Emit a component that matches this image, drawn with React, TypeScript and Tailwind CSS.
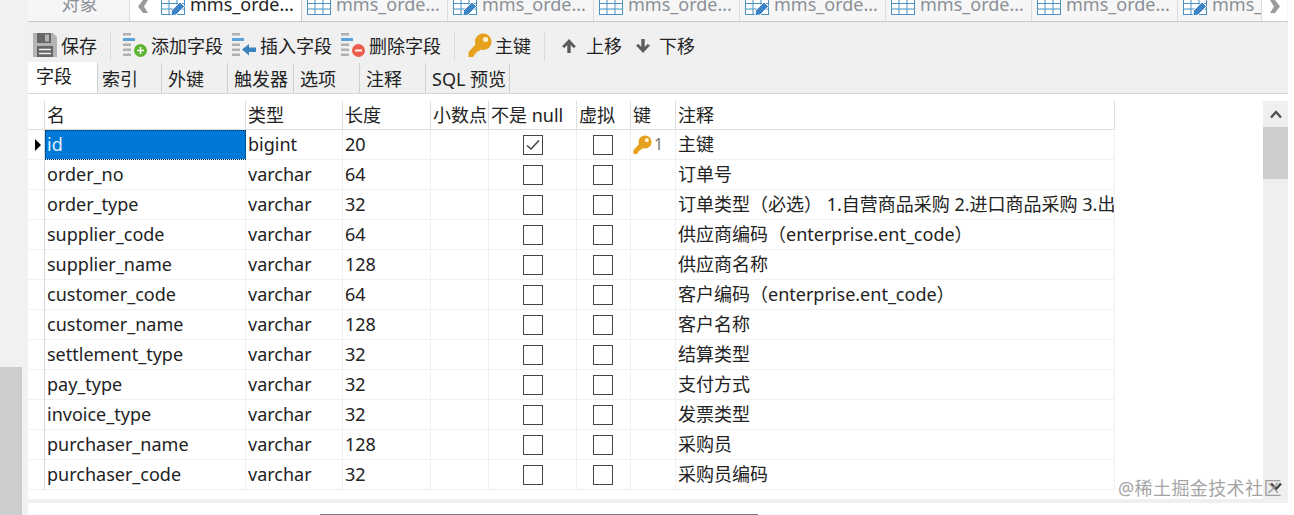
import React from "react";

const tabs = [
  { edit: false },
  { edit: true },
  { edit: false },
  { edit: true },
  { edit: false },
  { edit: false },
  { edit: true },
];

const subTabs = [
  { label: "索引", w: "w-[64px] pl-[4px]" },
  { label: "外键", w: "w-[66px] pl-[6px]" },
  { label: "触发器", w: "w-[66px] pl-[6px]" },
  { label: "选项", w: "w-[66px] pl-[6px]" },
  { label: "注释", w: "w-[66px] pl-[6px]" },
  { label: "SQL 预览", w: "w-[84px] pl-[6px]" },
];

const rows = [
  ["id", "bigint", "20", "主键"],
  ["order_no", "varchar", "64", "订单号"],
  ["order_type", "varchar", "32", "订单类型（必选） 1.自营商品采购 2.进口商品采购 3.出口商品采购"],
  ["supplier_code", "varchar", "64", "供应商编码（enterprise.ent_code）"],
  ["supplier_name", "varchar", "128", "供应商名称"],
  ["customer_code", "varchar", "64", "客户编码（enterprise.ent_code）"],
  ["customer_name", "varchar", "128", "客户名称"],
  ["settlement_type", "varchar", "32", "结算类型"],
  ["pay_type", "varchar", "32", "支付方式"],
  ["invoice_type", "varchar", "32", "发票类型"],
  ["purchaser_name", "varchar", "128", "采购员"],
  ["purchaser_code", "varchar", "32", "采购员编码"],
];

const gridCols = "grid grid-cols-[17px_201px_97px_88px_58px_88px_54px_45px_439px] w-[1087px]";

function TableIcon({ edit }: { edit: boolean }) {
  return (
    <svg width="24" height="18" viewBox="0 0 24 18" className="shrink-0 -mt-[2px]">
      <g fill="none" stroke="#4a90c2" strokeWidth="1">
        <rect x="0.5" y="0.5" width="23" height="16" fill="#fff" />
        <path d="M0.5 5.5h23M0.5 11h23M8 0.5v16M16 0.5v16" />
      </g>
      {edit && (
        <path
          d="M10 18 L10.5 12.5 L19 4 L23.5 8.5 L15 17 Z"
          fill="#3d85c6"
          stroke="#fff"
          strokeWidth="1"
        />
      )}
    </svg>
  );
}

function KeyIcon({ size = 24 }: { size?: number }) {
  return (
    <svg width={size} height={size} viewBox="0 0 24 24" className="shrink-0">
      <circle cx="15.2" cy="8.8" r="8.3" fill="#e6a11f" />
      <path d="M9 10 L14 15 L10.5 18.5 H8.5 V20.5 H6.5 V22.5 L5 24 H0.5 V19 Z" fill="#e6a11f" />
      <circle cx="17.5" cy="6.5" r="2.6" fill="#fdf0cf" />
    </svg>
  );
}

function FieldIcon({ kind }: { kind: "add" | "insert" | "delete" }) {
  return (
    <svg width="24" height="24" viewBox="0 0 24 24" className="shrink-0 -mt-[2px]">
      <rect x="0" y="0" width="8" height="2.5" fill="#b0b0b0" />
      <rect x="0" y="5" width="12" height="3" fill="#5ba3d9" />
      <rect x="0" y="10.5" width="8" height="2.5" fill="#b0b0b0" />
      <rect x="0" y="15.5" width="8" height="2.5" fill="#b0b0b0" />
      <rect x="0" y="20.5" width="8" height="2.5" fill="#b0b0b0" />
      {kind === "add" && (
        <g>
          <circle cx="17.5" cy="17.5" r="6.5" fill="#5cb531" />
          <path d="M17.5 14v7M14 17.5h7" stroke="#fff" strokeWidth="1.6" />
        </g>
      )}
      {kind === "insert" && <path d="M10 16.5 L17 11 V14.5 H24 V19 H17 V22.5 Z" fill="#3b83bd" />}
      {kind === "delete" && (
        <g>
          <circle cx="17.5" cy="17.5" r="6.5" fill="#ec5f4e" />
          <path d="M14 17.5h7" stroke="#fff" strokeWidth="1.8" />
        </g>
      )}
    </svg>
  );
}

function SaveIcon() {
  return (
    <svg width="24" height="24" viewBox="0 0 24 24" className="shrink-0 -mt-[2px]">
      <path d="M0 0h20l4 4v20H0z" fill="#b4b4b4" />
      <rect x="4" y="0" width="14" height="10" fill="#666" />
      <rect x="12" y="1.5" width="4" height="7" fill="#b4b4b4" />
      <rect x="4" y="13" width="16" height="11" fill="#666" />
      <path d="M6 16.5h12M6 20.5h12" stroke="#f0f0f0" strokeWidth="1.5" />
    </svg>
  );
}

function Arrow({ down }: { down?: boolean }) {
  return (
    <svg width="16" height="16" viewBox="0 0 16 16" className={down ? "rotate-180 shrink-0" : "shrink-0"}>
      <path d="M8 1 L15 8.5 L12.6 10 L9.7 7 V15 H6.3 V7 L3.4 10 L1 8.5 Z" fill="#5c5c5c" />
    </svg>
  );
}

function Check({ on }: { on?: boolean }) {
  return (
    <div className="w-[20px] h-[20px] border-[1.5px] border-[#454545] bg-white flex items-center justify-center">
      {on && (
        <svg width="14" height="12" viewBox="0 0 14 12">
          <path d="M1 6.5 L5 10 L13 1.5" fill="none" stroke="#454545" strokeWidth="1.6" />
        </svg>
      )}
    </div>
  );
}

function Sep() {
  return <div className="w-px h-[30px] bg-[#dcdcdc]" />;
}

const headCell = "h-[29px] border-r border-b border-r-[#dedede] border-b-[#dedede] pl-[2px] leading-[29px] whitespace-nowrap overflow-hidden";
const bodyCell = "h-[30px] border-r border-b border-[#f0f0f0] pl-[2px] leading-[29px] whitespace-nowrap overflow-hidden";

export default function App() {
  return (
    <div className="flex w-[1294px] h-[515px] overflow-hidden bg-white text-[18px] text-[#222] font-['Noto_Sans','Noto_Sans_CJK_SC',sans-serif]">
      {/* left dock strip */}
      <div className="w-[28px] h-full flex flex-col bg-[#f1f1f1]">
        <div className="h-[367px]" />
        <div className="w-[22px] flex-1 bg-[#cdcdcd]" />
      </div>

      <div className="w-[1260px] flex flex-col">
        {/* document tabs, top is cut off by the crop */}
        <div className="h-[22px] shrink-0 overflow-hidden flex border-b border-[#c8c8c8] bg-[#f6f6f6] text-[#8b9097]">
          <div className="w-[102px] h-full border-r border-[#dcdcdc] flex justify-center">
            <span className="-mt-[9px] pl-[2px] leading-[27px]">对象</span>
          </div>
          <div className="w-[26px] h-full bg-white flex items-start justify-center">
            <svg width="14" height="15" viewBox="0 0 14 15"><path d="M7 0 L2 6.5 L7 13 H12 L8 6.5 L12 0 Z" fill="#9a9a9a" /></svg>
          </div>
          <div className="w-[146px] h-[22px] bg-white text-[#222] border-r border-[#c8c8c8] flex items-start pl-[5px] gap-[4px]">
            <TableIcon edit />
            <span className="-mt-[9px] leading-[27px] ml-[1px]">mms_orde...</span>
          </div>
          {tabs.map((t, i) => (
            <div key={i} className={i === 6 ? "w-[84px] h-full border-r border-[#dcdcdc] flex items-start pl-[5px] gap-[4px] overflow-hidden" : "w-[146px] h-full border-r border-[#dcdcdc] flex items-start pl-[5px] gap-[4px]"}>
              <TableIcon edit={t.edit} />
              <span className="-mt-[9px] leading-[27px] ml-[1px] whitespace-nowrap">mms_orde...</span>
            </div>
          ))}
          <div className="w-[25px] h-full bg-white flex items-start justify-center">
            <svg width="14" height="15" viewBox="0 0 14 15"><path d="M7 0 L12 6.5 L7 13 H2 L6 6.5 L2 0 Z" fill="#9a9a9a" /></svg>
          </div>
        </div>

        {/* toolbar */}
        <div className="h-[41px] shrink-0 flex items-center bg-[#f0f0f0] pt-[7px] pl-[5px]">
          <SaveIcon />
          <span className="ml-[4px] mr-[13px]">保存</span>
          <Sep />
          <div className="ml-[12px]"><FieldIcon kind="add" /></div>
          <span className="ml-[4px] mr-[9px]">添加字段</span>
          <FieldIcon kind="insert" />
          <span className="ml-[4px] mr-[9px]">插入字段</span>
          <FieldIcon kind="delete" />
          <span className="ml-[4px] mr-[13px]">删除字段</span>
          <Sep />
          <div className="ml-[13px] -mt-[2px]"><KeyIcon /></div>
          <span className="ml-[3px] mr-[13px]">主键</span>
          <Sep />
          <div className="ml-[16px]"><Arrow /></div>
          <span className="ml-[9px] mr-[13px]">上移</span>
          <Arrow down />
          <span className="ml-[8px]">下移</span>
        </div>

        {/* sub tabs */}
        <div className="h-[31px] shrink-0 flex border-b border-[#d6d6d6] bg-[#f0f0f0]">
          <div className="w-[70px] h-[31px] -mt-px bg-white border-r border-[#d0d0d0] pl-[8px] leading-[29px] shrink-0">字段</div>
          {subTabs.map((t) => (
            <div key={t.label} className={`${t.w} h-full border-r border-[#d0d0d0] leading-[33px] shrink-0 whitespace-nowrap`}>
              {t.label}
            </div>
          ))}
        </div>

        {/* field grid + scrollbar */}
        <div className="flex-1 flex flex-col pt-[7px]">
          <div className="h-[398px] flex">
            <div className="w-[1235px]">
              <div className={gridCols}>
                <div className={headCell} />
                <div className={headCell}>名</div>
                <div className={headCell}>类型</div>
                <div className={headCell}>长度</div>
                <div className={headCell}>小数点</div>
                <div className={headCell}>不是 null</div>
                <div className={headCell}>虚拟</div>
                <div className={headCell}>键</div>
                <div className={headCell}>注释</div>
                {rows.map((r, i) => (
                  <React.Fragment key={r[0]}>
                    <div className={`${bodyCell} !pl-0 border-r-[#d8d8d8] flex items-center justify-end pr-[3px]`}>
                      {i === 0 && <div className="w-0 h-0 border-y-[6px] border-y-transparent border-l-[6px] border-l-black" />}
                    </div>
                    {i === 0 ? (
                      <div className="h-[30px] border-b border-[#f0f0f0] bg-[#0078d7] outline-1 -outline-offset-1 outline-dotted outline-[#0a2a4a] pl-[2px] leading-[29px] text-[#dff0ff]">
                        {r[0]}
                      </div>
                    ) : (
                      <div className={bodyCell}>{r[0]}</div>
                    )}
                    <div className={bodyCell}>{r[1]}</div>
                    <div className={bodyCell}>{r[2]}</div>
                    <div className={bodyCell} />
                    <div className={`${bodyCell} flex items-center justify-center !pl-0`}>
                      <Check on={i === 0} />
                    </div>
                    <div className={`${bodyCell} flex items-center justify-center !pl-0 pr-[2px]`}>
                      <Check />
                    </div>
                    <div className={`${bodyCell} flex items-center text-[#777]`}>
                      {i === 0 && (
                        <>
                          <KeyIcon size={19} />
                          <span className="ml-[2px] text-[16px]">1</span>
                        </>
                      )}
                    </div>
                    <div className={bodyCell}>{r[3]}</div>
                  </React.Fragment>
                ))}
              </div>
            </div>
            <div className="w-[25px] bg-[#efefef] flex flex-col">
              <div className="h-[26px] flex items-center justify-center">
                <svg width="12" height="9" viewBox="0 0 12 9"><path d="M1 7.5 L6 2 L11 7.5" fill="none" stroke="#505050" strokeWidth="2.4" /></svg>
              </div>
              <div className="h-[52px] bg-[#cdcdcd]" />
              <div className="flex-1" />
              <div className="h-[24px] flex items-center justify-center pb-[2px]">
                <svg width="12" height="9" viewBox="0 0 12 9"><path d="M1 1.5 L6 7 L11 1.5" fill="none" stroke="#404040" strokeWidth="2.4" /></svg>
              </div>
            </div>
          </div>
          <div className="h-[4px] bg-[#efefef]" />
          <div className="flex-1 flex flex-col justify-end pl-[292px]">
            <div className="w-[438px] h-px bg-[#777]" />
          </div>
        </div>
      </div>

      {/* watermark over the screenshot */}
      <div className="absolute left-[1118px] top-[475px] text-[18px] leading-[26px] text-[#9b9b9b] opacity-90 whitespace-nowrap tracking-[0.4px]">
        @稀土掘金技术社区
      </div>
    </div>
  );
}
